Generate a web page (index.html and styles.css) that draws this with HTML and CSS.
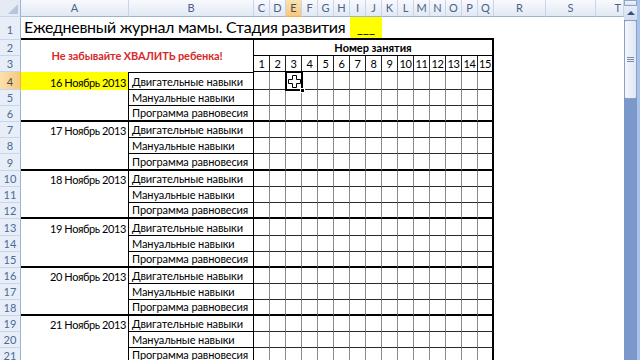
FILE: index.html
```html
<!DOCTYPE html>
<html lang="ru">
<head>
<meta charset="utf-8">
<title>Ежедневный журнал мамы</title>
<link rel="stylesheet" href="styles.css">
</head>
<body>
<div class="window">
  <div class="sheet">
    <table class="grid">
      <colgroup>
        <col class="w-rh"><col class="w-a"><col class="w-b">
        <col class="w-n"><col class="w-n"><col class="w-n"><col class="w-n"><col class="w-n">
        <col class="w-n"><col class="w-n"><col class="w-n"><col class="w-n"><col class="w-n">
        <col class="w-n"><col class="w-n"><col class="w-n"><col class="w-n"><col class="w-n">
        <col class="w-r"><col class="w-s"><col class="w-t">
      </colgroup>
      <tr class="colhead">
        <th class="corner"><span class="tri"></span></th>
        <th>A</th><th>B</th><th>C</th><th>D</th><th class="sel">E</th><th>F</th><th>G</th><th>H</th><th>I</th><th>J</th><th>K</th><th>L</th><th>M</th><th>N</th><th>O</th><th>P</th><th>Q</th><th>R</th><th>S</th><th class="cut">T</th>
      </tr>
      <tr class="r1">
        <th>1</th>
        <td class="title" colspan="8">Ежедневный журнал мамы. Стадия развития</td>
        <td class="yel" colspan="2"><span class="blank">___</span></td>
        <td class="line" colspan="7"></td>
      </tr>
      <tr class="r2">
        <th>2</th>
        <td class="warn" colspan="2" rowspan="2">Не забывайте ХВАЛИТЬ ребенка!</td>
        <td class="hdr" colspan="15">Номер занятия</td>
      </tr>
      <tr class="r3 nums">
        <th>3</th>
        <td>1</td><td>2</td><td>3</td><td>4</td><td>5</td><td>6</td><td>7</td><td>8</td><td>9</td><td>10</td><td>11</td><td>12</td><td>13</td><td>14</td><td>15</td>
      </tr>

      <tr class="r g1 top"><th class="sel">4</th><td class="a today">16 Ноябрь 2013</td><td class="b">Двигательные навыки</td><td></td><td></td><td></td><td></td><td></td><td></td><td></td><td></td><td></td><td></td><td></td><td></td><td></td><td></td><td></td></tr>
      <tr class="r"><th>5</th><td class="a"></td><td class="b">Мануальные навыки</td><td></td><td></td><td></td><td></td><td></td><td></td><td></td><td></td><td></td><td></td><td></td><td></td><td></td><td></td><td></td></tr>
      <tr class="r g3"><th>6</th><td class="a"></td><td class="b">Программа равновесия</td><td></td><td></td><td></td><td></td><td></td><td></td><td></td><td></td><td></td><td></td><td></td><td></td><td></td><td></td><td></td></tr>

      <tr class="r g1"><th>7</th><td class="a">17 Ноябрь 2013</td><td class="b">Двигательные навыки</td><td></td><td></td><td></td><td></td><td></td><td></td><td></td><td></td><td></td><td></td><td></td><td></td><td></td><td></td><td></td></tr>
      <tr class="r"><th>8</th><td class="a"></td><td class="b">Мануальные навыки</td><td></td><td></td><td></td><td></td><td></td><td></td><td></td><td></td><td></td><td></td><td></td><td></td><td></td><td></td><td></td></tr>
      <tr class="r g3 tall"><th>9</th><td class="a"></td><td class="b">Программа равновесия</td><td></td><td></td><td></td><td></td><td></td><td></td><td></td><td></td><td></td><td></td><td></td><td></td><td></td><td></td><td></td></tr>

      <tr class="r g1"><th>10</th><td class="a">18 Ноябрь 2013</td><td class="b">Двигательные навыки</td><td></td><td></td><td></td><td></td><td></td><td></td><td></td><td></td><td></td><td></td><td></td><td></td><td></td><td></td><td></td></tr>
      <tr class="r"><th>11</th><td class="a"></td><td class="b">Мануальные навыки</td><td></td><td></td><td></td><td></td><td></td><td></td><td></td><td></td><td></td><td></td><td></td><td></td><td></td><td></td><td></td></tr>
      <tr class="r g3"><th>12</th><td class="a"></td><td class="b">Программа равновесия</td><td></td><td></td><td></td><td></td><td></td><td></td><td></td><td></td><td></td><td></td><td></td><td></td><td></td><td></td><td></td></tr>

      <tr class="r g1 tall"><th>13</th><td class="a">19 Ноябрь 2013</td><td class="b">Двигательные навыки</td><td></td><td></td><td></td><td></td><td></td><td></td><td></td><td></td><td></td><td></td><td></td><td></td><td></td><td></td><td></td></tr>
      <tr class="r"><th>14</th><td class="a"></td><td class="b">Мануальные навыки</td><td></td><td></td><td></td><td></td><td></td><td></td><td></td><td></td><td></td><td></td><td></td><td></td><td></td><td></td><td></td></tr>
      <tr class="r g3"><th>15</th><td class="a"></td><td class="b">Программа равновесия</td><td></td><td></td><td></td><td></td><td></td><td></td><td></td><td></td><td></td><td></td><td></td><td></td><td></td><td></td><td></td></tr>

      <tr class="r g1"><th>16</th><td class="a">20 Ноябрь 2013</td><td class="b">Двигательные навыки</td><td></td><td></td><td></td><td></td><td></td><td></td><td></td><td></td><td></td><td></td><td></td><td></td><td></td><td></td><td></td></tr>
      <tr class="r"><th>17</th><td class="a"></td><td class="b">Мануальные навыки</td><td></td><td></td><td></td><td></td><td></td><td></td><td></td><td></td><td></td><td></td><td></td><td></td><td></td><td></td><td></td></tr>
      <tr class="r g3"><th>18</th><td class="a"></td><td class="b">Программа равновесия</td><td></td><td></td><td></td><td></td><td></td><td></td><td></td><td></td><td></td><td></td><td></td><td></td><td></td><td></td><td></td></tr>

      <tr class="r g1"><th>19</th><td class="a">21 Ноябрь 2013</td><td class="b">Двигательные навыки</td><td></td><td></td><td></td><td></td><td></td><td></td><td></td><td></td><td></td><td></td><td></td><td></td><td></td><td></td><td></td></tr>
      <tr class="r"><th>20</th><td class="a"></td><td class="b">Мануальные навыки</td><td></td><td></td><td></td><td></td><td></td><td></td><td></td><td></td><td></td><td></td><td></td><td></td><td></td><td></td><td></td></tr>
      <tr class="r g3"><th>21</th><td class="a"></td><td class="b">Программа равновесия</td><td></td><td></td><td></td><td></td><td></td><td></td><td></td><td></td><td></td><td></td><td></td><td></td><td></td><td></td><td></td></tr>
    </table>

    <div class="selection"><span class="handle"></span></div>
    <svg class="cursor" width="13" height="13" viewBox="0 0 13 13" aria-hidden="true">
      <path d="M4.5 0.5h4v4h4v4h-4v4h-4v-4h-4v-4h4z" fill="#fff" stroke="#000" stroke-width="1"/>
    </svg>
  </div>

  <div class="vscroll">
    <div class="split"></div>
    <div class="up"><span class="arrow"></span></div>
    <div class="thumb"><span class="grip"></span></div>
    <div class="track"></div>
  </div>
</div>
</body>
</html>
```

FILE: styles.css
```css
* { box-sizing: border-box; }

html, body {
  margin: 0;
  padding: 0;
  background: #fff;
}

.window {
  width: 640px;
  height: 360px;
  display: flex;
  overflow: hidden;
}

.sheet {
  position: relative;
  width: 624px;
  height: 360px;
  overflow: hidden;
}

.grid {
  border-collapse: separate;
  border-spacing: 0;
  table-layout: fixed;
  width: 624px;
  font-family: Lato, "Open Sans", sans-serif;
  font-size: 11px;
  color: #000;
}

.w-rh { width: 21px; }
.w-a { width: 108px; }
.w-b { width: 125px; }
.w-n { width: 16px; }
.w-r { width: 52px; }
.w-s { width: 50px; }
.w-t { width: 28px; }

.grid td, .grid th {
  padding: 0;
  overflow: hidden;
  white-space: nowrap;
  line-height: 14px;
}

/* column headers */
.colhead { height: 17px; }
.colhead th {
  font-weight: normal;
  font-size: 11px;
  color: #4c6287;
  text-align: center;
  vertical-align: middle;
  background: linear-gradient(#f7f9fd, #e2e9f4);
  border-right: 1px solid #c9d6e9;
  border-bottom: 1px solid #9eb3d0;
}
.colhead th.sel {
  background: linear-gradient(#fbe2b2, #f5c77a);
  color: #4c4c4c;
  border-bottom-color: #f0b050;
}
.colhead th.cut { text-align: right; padding-right: 2px; }
.colhead th.corner {
  position: relative;
  background: #e4ebf5;
  border-right: 1px solid #9eb3d0;
}
.tri {
  position: absolute;
  right: 2px;
  bottom: 2px;
  width: 0;
  height: 0;
  border-left: 10px solid transparent;
  border-bottom: 10px solid #b6c6dd;
}

/* row headers */
.grid tr > th:first-child {
  font-weight: normal;
  font-size: 11px;
  color: #4b6a96;
  text-align: center;
  vertical-align: bottom;
  line-height: 13px;
  padding-bottom: 1px;
  background: #e8eef7;
  border-right: 1px solid #9eb3d0;
  border-bottom: 1px solid #c9d6e9;
}
.grid tr.r1 > th:first-child { padding-bottom: 3px; }
.grid tr.colhead > th:first-child { background: #e4ebf5; padding-bottom: 0; }
.grid tr > th.sel:first-child {
  background: linear-gradient(to right, #fbe1ad, #f6c97f);
  color: #4c4c4c;
  border-right-color: #f0b050;
}

/* row 1 */
.r1 { height: 23px; }
.r1 td {
  border-bottom: 2px solid #000;
  vertical-align: bottom;
}
.grid td.title {
  overflow: visible;
  font-size: 16px;
  letter-spacing: -0.3px;
  line-height: 18px;
  padding: 0 0 2px 3px;
}
.grid td.yel {
  background: #ffff00;
  text-align: center;
  padding-bottom: 2px;
}
.blank {
  font-size: 13px;
  line-height: 16px;
  color: #000;
}

/* rows 2-3 */
.r2, .r3 { height: 16px; }
.warn {
  color: #d52b2b;
  font-weight: bold;
  letter-spacing: -0.1px;
  text-align: center;
  vertical-align: middle;
  border-right: 1px solid #000;
}
.hdr {
  font-weight: bold;
  text-align: center;
  vertical-align: bottom;
  border-bottom: 1px solid #000;
  border-right: 2px solid #000;
}
.nums td {
  text-align: center;
  vertical-align: bottom;
  letter-spacing: -0.3px;
  border-right: 1px solid #222;
  border-bottom: 1px solid #000;
}
.nums td:last-child { border-right: 2px solid #000; }

/* body rows */
.r { height: 16px; }
.r.tall { height: 17px; }
.r.top { height: 18px; }
.r td { vertical-align: bottom; }
.r td.a {
  text-align: right;
  padding-right: 2px;
  letter-spacing: -0.4px;
  border-right: 1px solid #000;
}
.r td.today { background: #ffff00; }
.r td.b {
  padding-left: 3px;
  letter-spacing: -0.1px;
  border-right: 1px solid #000;
  border-bottom: 1px solid #000;
}
.r.top td.b { border-top: 1px solid #000; }
.r td:nth-child(n+4) {
  border-right: 1px solid #8a8a8a;
  border-bottom: 1px solid #2a2a2a;
}
.r td:nth-child(18) { border-right: 2px solid #000; }
.r.g3 td.a,
.r.g3 td.b,
.r.g3 td:nth-child(n+4) { border-bottom: 2px solid #000; }

/* active cell E4 */
.selection {
  position: absolute;
  left: 285px;
  top: 71px;
  width: 18px;
  height: 20px;
  border: 2px solid #000;
}
.handle {
  position: absolute;
  right: -4px;
  bottom: -4px;
  width: 5px;
  height: 5px;
  background: #000;
  border: 1px solid #fff;
}
.cursor {
  position: absolute;
  left: 288px;
  top: 75px;
}

/* vertical scrollbar */
.vscroll {
  width: 16px;
  height: 360px;
  display: flex;
  flex-direction: column;
  background: #7a98c9;
  border-right: 3px solid #a9c2ea;
}
.split {
  height: 6px;
  background: linear-gradient(#f4f7fc, #d6e0ef);
  border: 1px solid #8ea5c8;
}
.up {
  height: 14px;
  display: flex;
  align-items: center;
  justify-content: center;
  background: linear-gradient(#e7eef9, #cfdcef);
}
.arrow {
  width: 0;
  height: 0;
  border-left: 4px solid transparent;
  border-right: 4px solid transparent;
  border-bottom: 4px solid #34507a;
}
.thumb {
  height: 79px;
  display: flex;
  align-items: center;
  justify-content: center;
  background: linear-gradient(to right, #f4f7fc, #dfe7f4);
  border: 1px solid #8aa0c4;
  border-radius: 2px;
}
.grip {
  width: 7px;
  height: 5px;
  border-top: 1px solid #7a8aa6;
  border-bottom: 1px solid #7a8aa6;
  background: linear-gradient(transparent 1px, #7a8aa6 1px, #7a8aa6 2px, transparent 2px);
}
.track { flex: 1; }
```
